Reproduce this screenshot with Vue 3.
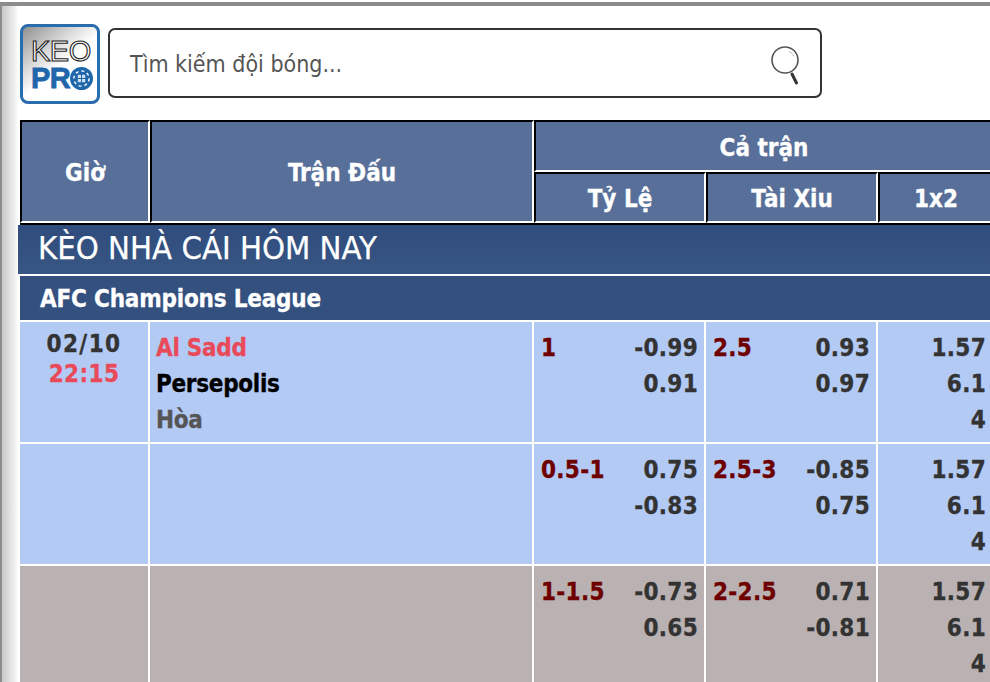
<script setup>
const groups = [
  { shade: 'blue', first: true, hOdds: '1', h: ['-0.99', '0.91'], tOdds: '2.5', t: ['0.93', '0.97'] },
  { shade: 'blue', hOdds: '0.5-1', h: ['0.75', '-0.83'], tOdds: '2.5-3', t: ['-0.85', '0.75'] },
  { shade: 'grey', hOdds: '1-1.5', h: ['-0.73', '0.65'], tOdds: '2-2.5', t: ['0.71', '-0.81'] }
]
const x12 = ['1.57', '6.1', '4']
</script>

<template>
  <div class="page">
    <header class="top">
      <div class="logo">
        <span class="keo">KEO</span>
        <div class="pro">
          <span>PR</span>
          <svg class="chip" width="23" height="23" viewBox="0 0 23 23" aria-label="O">
            <circle cx="11.5" cy="11.5" r="11.5" fill="#1f66ab" />
            <circle cx="11.5" cy="11.5" r="7.6" fill="none" stroke="#fff" stroke-width="1.4" stroke-dasharray="3 2.9" />
            <g fill="#cfe0f2">
              <rect x="7.8" y="7.8" width="3.2" height="3.2" />
              <rect x="12" y="7.8" width="3.2" height="3.2" />
              <rect x="7.8" y="12" width="3.2" height="3.2" />
              <rect x="12" y="12" width="3.2" height="3.2" />
            </g>
          </svg>
        </div>
      </div>
      <div class="search">
        <span class="placeholder">Tìm kiếm đội bóng...</span>
        <svg class="lens" width="32" height="44" viewBox="0 0 32 44">
          <circle cx="15" cy="15" r="13" fill="#fff" stroke="#555" stroke-width="1.6" />
          <path d="M19 6.500a9.500 9.500 0 0 1 5 5" fill="none" stroke="#bbb" stroke-width="1" />
          <path d="M22 29l4.500 9" stroke="#333" stroke-width="3" stroke-linecap="round" />
        </svg>
      </div>
    </header>

    <div class="thead">
      <div class="th gio">Giờ</div>
      <div class="th match">Trận Đấu</div>
      <div class="th full">Cả trận</div>
      <div class="th">Tỷ Lệ</div>
      <div class="th">Tài Xiu</div>
      <div class="th">1x2</div>
    </div>

    <div class="title">KÈO NHÀ CÁI HÔM NAY</div>
    <div class="league">AFC Champions League</div>

    <div v-for="(g, i) in groups" :key="i" class="row" :class="g.shade">
      <div class="cell when">
        <template v-if="g.first">
          <div class="date">02/10</div>
          <div class="red">22:15</div>
        </template>
      </div>
      <div class="cell teams">
        <template v-if="g.first">
          <div class="red">Al Sadd</div>
          <div class="black">Persepolis</div>
          <div class="draw">Hòa</div>
        </template>
      </div>
      <div class="cell odds">
        <div class="line"><span class="hcp">{{ g.hOdds }}</span><span>{{ g.h[0] }}</span></div>
        <div class="line"><span></span><span>{{ g.h[1] }}</span></div>
      </div>
      <div class="cell odds">
        <div class="line"><span class="hcp">{{ g.tOdds }}</span><span>{{ g.t[0] }}</span></div>
        <div class="line"><span></span><span>{{ g.t[1] }}</span></div>
      </div>
      <div class="cell odds last">
        <div v-for="v in x12" :key="v" class="line end">{{ v }}</div>
      </div>
    </div>
  </div>
</template>

<style>
html, body { margin: 0; background: #fff; overflow: hidden; }
</style>

<style scoped>
.page {
  box-sizing: border-box;
  width: 990px;
  height: 680px;
  margin-top: 2px;
  border-top: 4px solid #8c8c8c;
  overflow: hidden;
  padding-left: 18px;
  background: linear-gradient(90deg, #8c8c8c 0 2px, #c8c8c8 2px, #f4f4f4 16px, #fff 18px);
  font-family: "DejaVu Sans Condensed", "DejaVu Sans", sans-serif;
  color: #333;
}
.top {
  display: flex;
  align-items: flex-start;
  gap: 8px;
  height: 114px;
  padding: 18px 0 0 2px;
  box-sizing: border-box;
}
.logo {
  box-sizing: border-box;
  width: 80px;
  height: 80px;
  border: 3px solid #2a6cae;
  border-radius: 8px;
  background: linear-gradient(140deg, #909090 0%, #dcdcdc 34%, #fff 52%);
  display: flex;
  flex-direction: column;
  align-items: flex-start;
  padding: 12px 0 0 8px;
  font-family: "Liberation Sans", sans-serif;
}
.keo {
  font-size: 29px;
  line-height: 24px;
  color: #fff;
  -webkit-text-stroke: 1.1px #222;
  letter-spacing: -0.5px;
}
.pro {
  display: flex;
  align-items: center;
  font-size: 29px;
  font-weight: 700;
  line-height: 24px;
  color: #1f66ab;
  margin-top: 3px;
  letter-spacing: -0.5px;
  -webkit-text-stroke: 0.8px #1f66ab;
}
.search {
  box-sizing: border-box;
  width: 714px;
  height: 70px;
  margin-top: 4px;
  border: 2px solid #333;
  border-radius: 7px;
  display: flex;
  align-items: center;
  justify-content: space-between;
  padding: 0 18px 0 20px;
  background: #fff;
}
.placeholder {
  font-size: 23px;
  color: #555;
  padding-top: 2px;
}
.lens { margin-top: 8px; }

.thead {
  display: grid;
  grid-template-columns: 130px 384px 172px 172px 116px;
  grid-template-rows: 52px 51px;
  margin-left: 2px;
  width: 974px;
  border-bottom: 2px solid #000;
}
.th {
  box-sizing: border-box;
  padding-top: 3px;
  border-top: 2px solid #000;
  border-left: 2px solid #000;
  border-right: 2px solid #fff;
  border-bottom: 2px solid #fff;
  background: #587099;
  color: #fff;
  font-weight: 700;
  font-size: 24px;
  -webkit-text-stroke: 0.3px #fff;
  display: flex;
  align-items: center;
  justify-content: center;
}
.gio, .match { grid-row: span 2; }
.full { grid-column: span 3; }

.title {
  box-sizing: border-box;
  height: 51px;
  border-bottom: 2px solid #fff;
  background: linear-gradient(180deg, #2f4c7c, #385684);
  color: #fff;
  font-size: 32.6px;
  -webkit-text-stroke: 0.25px #fff;
  line-height: 47px;
  padding-left: 20px;
  width: 972px;
}
.league {
  box-sizing: border-box;
  margin-left: 2px;
  width: 970px;
  height: 46px;
  border-bottom: 2px solid #fff;
  background: #33507f;
  color: #fff;
  font-weight: 700;
  font-size: 24px;
  letter-spacing: -0.2px;
  -webkit-text-stroke: 0.3px #fff;
  line-height: 47px;
  padding-left: 20px;
}
.row {
  display: grid;
  grid-template-columns: 130px 384px 172px 172px 116px;
  margin-left: 2px;
  height: 122px;
  font-weight: 700;
  font-size: 24px;
  -webkit-text-stroke: 0.3px currentColor;
}
.row.blue .cell { background: #b3caf5; }
.row.grey .cell { background: #bab2b2; }
.cell {
  box-sizing: border-box;
  border-right: 2px solid #fff;
  border-bottom: 2px solid #fff;
}
.when {
  padding-top: 7px;
  line-height: 30px;
  text-align: center;
  letter-spacing: 0.4px;
}
.date { letter-spacing: 1.4px; }
.teams {
  padding: 8px 0 0 6px;
  line-height: 36px;
  letter-spacing: -0.3px;
}
.red { color: #e84a5a; }
.black { color: #000; }
.draw { color: #555; }
.odds {
  padding: 8px 6px 0 7px;
  line-height: 36px;
  letter-spacing: 0.3px;
}
.line {
  display: flex;
  justify-content: space-between;
}
.line.end { justify-content: flex-end; }
.hcp { color: #6e0000; }
</style>
